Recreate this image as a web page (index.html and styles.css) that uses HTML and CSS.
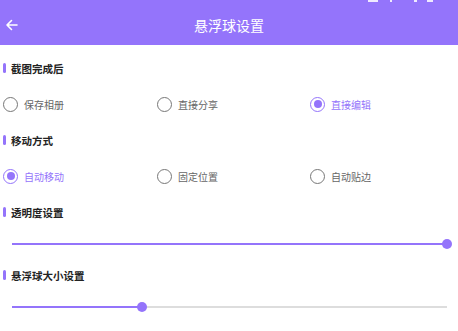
FILE: index.html
```html
<!DOCTYPE html>
<html lang="zh-CN">
<head>
    <meta charset="UTF-8">
    <meta name="viewport" content="width=device-width, initial-scale=1.0">
    <title>悬浮球设置</title>
    <link rel="stylesheet" href="styles.css">
</head>
<body>
    <div class="header">
        <div class="status">
            <span class="dot w10"></span>
            <span class="dot w2"></span>
            <span class="dot w3"></span>
            <span class="dot w6"></span>
        </div>
        <svg class="back" width="13" height="12" viewBox="0 0 13 12">
            <path d="M12 6H2M6.5 1.5L2 6l4.5 4.5" fill="none" stroke="#fff" stroke-width="1.6" stroke-linecap="round" stroke-linejoin="round"/>
        </svg>
        <div class="title">悬浮球设置</div>
    </div>

    <div class="content">
        <div class="section-title">截图完成后</div>
        <div class="radios">
            <div class="radio"><span class="circle"></span>保存相册</div>
            <div class="radio"><span class="circle"></span>直接分享</div>
            <div class="radio checked"><span class="circle"></span>直接编辑</div>
        </div>

        <div class="section-title">移动方式</div>
        <div class="radios">
            <div class="radio checked"><span class="circle"></span>自动移动</div>
            <div class="radio"><span class="circle"></span>固定位置</div>
            <div class="radio"><span class="circle"></span>自动贴边</div>
        </div>

        <div class="section-title">透明度设置</div>
        <div class="slider">
            <div class="fill" style="width: 435px"></div>
            <div class="thumb"></div>
            <div class="rest"></div>
        </div>

        <div class="section-title">悬浮球大小设置</div>
        <div class="slider">
            <div class="fill" style="width: 130px"></div>
            <div class="thumb"></div>
            <div class="rest"></div>
        </div>
    </div>
</body>
</html>
```

FILE: styles.css
```css
* {
    box-sizing: border-box;
}

body {
    margin: 0;
    width: 458px;
    height: 331px;
    overflow: hidden;
    background-color: #fff;
    font-family: "Noto Sans CJK SC", "Noto Sans", sans-serif;
}

.header {
    position: relative;
    height: 45px;
    background-color: #9474fb;
    display: flex;
    align-items: center;
    justify-content: center;
}

.status {
    position: absolute;
    top: 0;
    right: 25px;
    display: flex;
    gap: 10px;
}

.status .dot {
    height: 2px;
    background-color: rgba(255, 255, 255, 0.85);
}

.status .w10 { width: 10px; }
.status .w2 { width: 2px; margin-left: 2px; }
.status .w3 { width: 3px; margin-left: 12px; }
.status .w6 { width: 6px; }

.back {
    position: absolute;
    left: 5px;
    top: 19px;
}

.title {
    color: #fff;
    font-size: 14px;
    line-height: 16px;
    margin-top: 5px;
}

.content {
    display: flex;
    flex-direction: column;
    gap: 19px;
    padding-top: 16px;
}

.section-title {
    display: flex;
    align-items: center;
    height: 14px;
    font-size: 10.5px;
    font-weight: bold;
    color: #222;
    padding-left: 3px;
}

.section-title::before {
    content: "";
    width: 3px;
    height: 10px;
    border-radius: 1.5px;
    background-color: #9474fb;
    margin-right: 5px;
}

.radios {
    display: grid;
    grid-template-columns: 154px 153px 1fr;
    height: 20px;
    padding-left: 3px;
}

.radio {
    display: flex;
    align-items: center;
    font-size: 10px;
    color: #666;
}

.circle {
    width: 15px;
    height: 15px;
    border: 1.8px solid #777;
    border-radius: 50%;
    margin-right: 6px;
    display: flex;
    align-items: center;
    justify-content: center;
}

.radio.checked {
    color: #9474fb;
}

.radio.checked .circle {
    border-color: #9474fb;
}

.radio.checked .circle::after {
    content: "";
    width: 8px;
    height: 8px;
    border-radius: 50%;
    background-color: #9474fb;
}

.slider {
    display: flex;
    align-items: center;
    height: 11px;
    padding-left: 12px;
    width: 447px;
}

.slider .fill {
    height: 2px;
    background-color: #9474fb;
}

.slider .thumb {
    flex: none;
    width: 10px;
    height: 10px;
    border-radius: 50%;
    background-color: #9474fb;
    margin: 0 -5px;
    position: relative;
    z-index: 1;
}

.slider .rest {
    flex: 1;
    height: 2px;
    background-color: #ddd;
}
```
